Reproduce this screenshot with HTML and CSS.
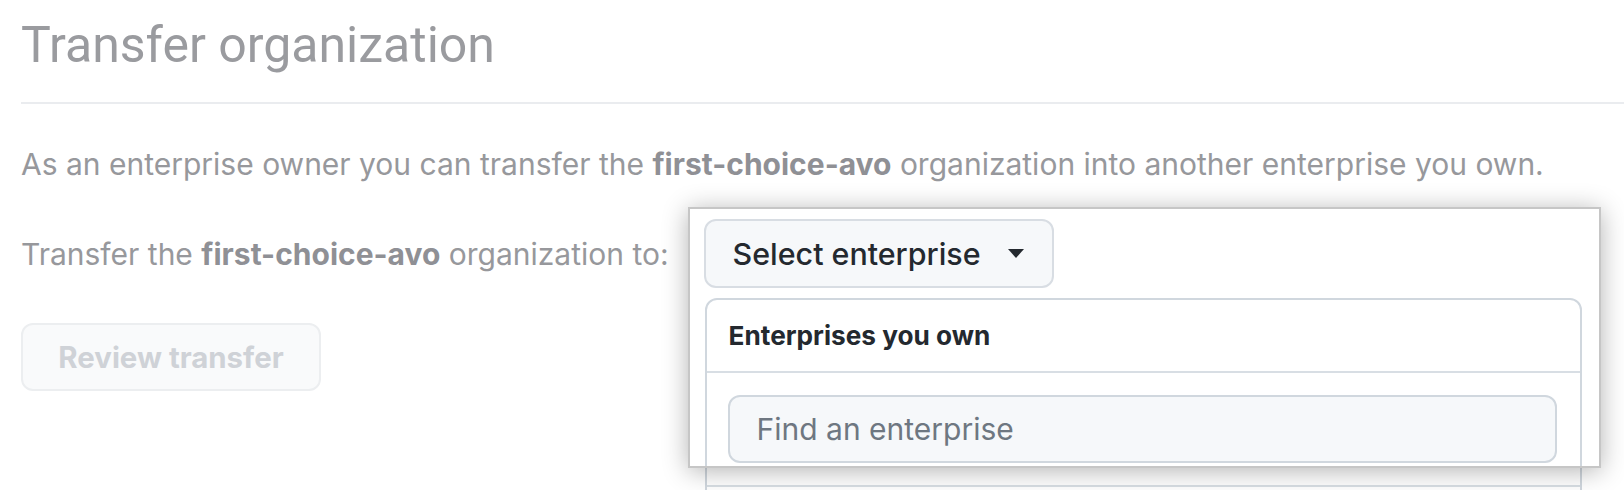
FILE: index.html
```html
<!DOCTYPE html>
<html lang="en">
<head>
<meta charset="utf-8">
<title>Transfer organization</title>
<link rel="stylesheet" href="styles.css">
</head>
<body>
<main class="page">
  <h1 class="title">Transfer organization</h1>
  <p class="lead">As an enterprise owner you can transfer the <strong>first-choice-avo</strong> organization into another enterprise you own.</p>
  <div class="transfer-row">
    <span class="label">Transfer the <strong>first-choice-avo</strong> organization to:</span>
    <div class="select-menu">
      <button class="select-btn" type="button">Select enterprise <span class="caret"></span></button>
      <div class="menu">
        <div class="menu-header">Enterprises you own</div>
        <div class="menu-filter">
          <div class="filter-input">Find an enterprise</div>
        </div>
        <div class="menu-list"></div>
      </div>
    </div>
  </div>
  <button class="review-btn" type="button" disabled>Review transfer</button>
  <div class="spotlight"></div>
</main>
</body>
</html>
```

FILE: styles.css
```css
html, body {
  margin: 0;
  padding: 0;
  background: #ffffff;
}
body {
  font-family: Inter, "Liberation Sans", sans-serif;
  overflow: hidden;
  height: 490px;
}
.page {
  position: relative;
  padding-left: 21px;
}
.title {
  margin: 0;
  padding-top: 16px;
  padding-bottom: 28px;
  font-family: Roboto, "Liberation Sans", sans-serif;
  font-size: 50px;
  line-height: 58px;
  font-weight: 400;
  color: #9a9b9f;
  border-bottom: 2px solid #eaecef;
}
.lead {
  margin: 40px 0 0;
  font-size: 30px;
  line-height: 40px;
  color: #97989c;
}
.lead strong, .label strong {
  font-weight: 700;
  color: #8f9095;
}
.transfer-row {
  display: flex;
  align-items: center;
  gap: 35px;
  margin-top: 35px;
}
.label {
  font-size: 30px;
  line-height: 40px;
  color: #97989c;
}
.select-menu {
  position: relative;
}
.select-btn {
  display: flex;
  align-items: center;
  gap: 27px;
  height: 69px;
  padding: 0 28px 0 27px;
  background: #f6f8fa;
  border: 2px solid #d8dde3;
  border-radius: 12px;
  font-family: Inter, "Liberation Sans", sans-serif;
  font-size: 30.4px;
  font-weight: 500;
  color: #24292f;
}
.caret {
  width: 0;
  height: 0;
  border-left: 8px solid transparent;
  border-right: 8px solid transparent;
  border-top: 9px solid #24292f;
}
.menu {
  position: absolute;
  left: 1px;
  top: 79px;
  width: 877px;
  height: 320px;
  box-sizing: border-box;
  background: #ffffff;
  border: 2px solid #d0d7de;
  border-radius: 12px;
  display: flex;
  flex-direction: column;
}
.menu-header {
  height: 73px;
  box-sizing: border-box;
  padding: 0 22px;
  display: flex;
  align-items: center;
  font-size: 26.2px;
  font-weight: 700;
  color: #24292f;
  border-bottom: 2px solid #d8dee4;
}
.menu-filter {
  padding: 22px 23px 22px 21px;
  border-bottom: 2px solid #d8dee4;
}
.filter-input {
  height: 68px;
  box-sizing: border-box;
  padding: 0 27px;
  display: flex;
  align-items: center;
  background: #f6f8fa;
  border: 2px solid #d0d7de;
  border-radius: 12px;
  font-size: 30px;
  color: #6e7781;
}
.review-btn {
  display: block;
  margin-top: 35px;
  width: 300px;
  height: 68px;
  background: #f9fafb;
  border: 2px solid #eceef0;
  border-radius: 12px;
  font-family: Inter, "Liberation Sans", sans-serif;
  font-size: 29.4px;
  font-weight: 700;
  color: #cfd2d7;
}
.spotlight {
  position: absolute;
  left: 688px;
  top: 207px;
  width: 913px;
  height: 261px;
  box-sizing: border-box;
  border: 2px solid #c6c6c6;
  box-shadow: 0 3px 24px rgba(0, 0, 0, 0.3);
  pointer-events: none;
}
```
